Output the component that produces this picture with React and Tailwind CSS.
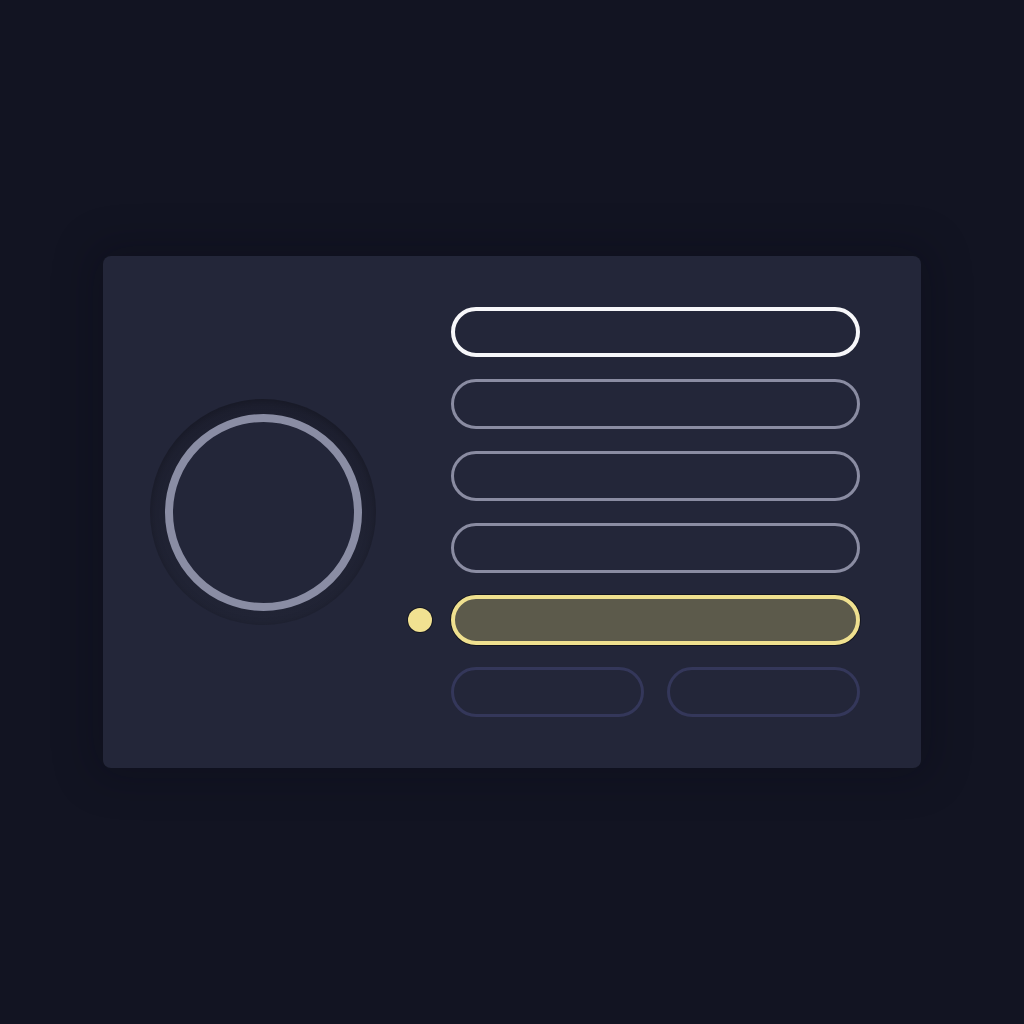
export default function App() {
  const rows = [
    { kind: "active" },
    { kind: "muted" },
    { kind: "muted" },
    { kind: "muted" },
    { kind: "selected" },
  ];

  return (
    <main className="min-h-screen w-full bg-[#121422] flex items-center justify-center">
      {/* ── CARD ── */}
      <div className="w-[818px] h-[512px] rounded-lg bg-[#232639] shadow-[0_0_40px_10px_rgba(8,9,18,0.25)] flex items-center pl-[47px]">
        {/* Dial */}
        <div className="w-[226px] h-[226px] rounded-full bg-gradient-to-b from-[#1d1f2f] to-[#212435] shadow-[inset_0_2px_8px_rgba(0,0,0,0.25)] flex items-center justify-center">
          <div className="w-[197px] h-[197px] rounded-full border-[8px] border-[#8a8da4] bg-[#232639]" />
        </div>

        {/* Rows */}
        <div className="ml-[32px] flex flex-col gap-[22px]">
          {rows.map((row, i) => (
            <div key={i} className="flex items-center gap-[19px]">
              <div className="w-6 h-6 flex items-center justify-center">
                {row.kind === "selected" && (
                  <span className="w-6 h-6 rounded-full bg-[#f1e191] shadow-[0_0_0_1px_rgba(0,0,0,0.4)]" />
                )}
              </div>
              {row.kind === "active" && (
                <div className="w-[409px] h-[50px] rounded-full border-4 border-[#f7f7fa]" />
              )}
              {row.kind === "muted" && (
                <div className="w-[409px] h-[50px] rounded-full border-[3.5px] border-[#8a8ca2]" />
              )}
              {row.kind === "selected" && (
                <div className="w-[409px] h-[50px] rounded-full border-4 border-[#efe08f] bg-[#5c5a4b] shadow-[0_0_0_1px_rgba(0,0,0,0.45)]" />
              )}
            </div>
          ))}

          {/* bottom pair */}
          <div className="flex items-center gap-[19px]">
            <div className="w-6 h-6" />
            <div className="w-[409px] flex gap-[23px]">
              <div className="flex-1 h-[50px] rounded-full border-[3.5px] border-[#34375a]" />
              <div className="flex-1 h-[50px] rounded-full border-[3.5px] border-[#34375a]" />
            </div>
          </div>
        </div>
      </div>
    </main>
  );
}
